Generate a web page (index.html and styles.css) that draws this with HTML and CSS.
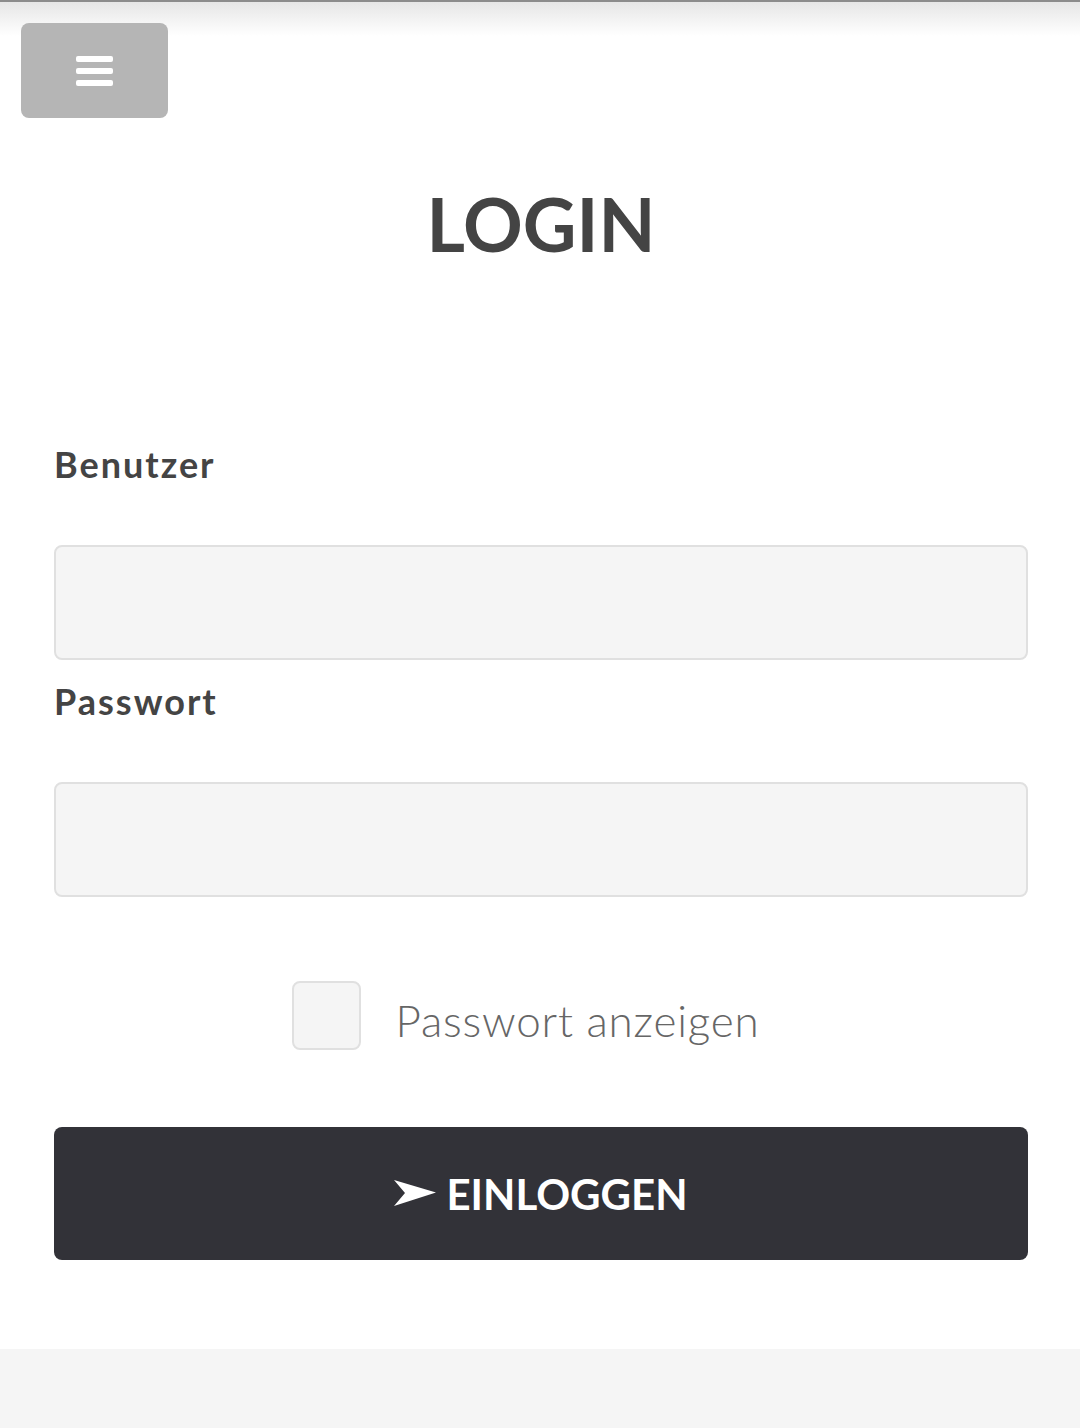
FILE: index.html
```html
<!doctype html>
<html lang="de">

<head>
  <meta charset="UTF-8" />
  <meta name="viewport" content="width=device-width, initial-scale=1.0" />
  <title>Login</title>
  <link rel="stylesheet" href="styles.css">
</head>

<body>
  <header class="topbar">
    <button class="menu-toggle" type="button" aria-label="Menü">
      <span class="bar"></span>
      <span class="bar"></span>
      <span class="bar"></span>
    </button>
  </header>

  <main class="login">
    <h1>LOGIN</h1>

    <form class="login-form">
      <label for="user">Benutzer</label>
      <input type="text" id="user" name="user" />

      <label for="pass">Passwort</label>
      <input type="password" id="pass" name="pass" />

      <div class="show-pass">
        <input type="checkbox" id="showpass" />
        <label for="showpass">Passwort anzeigen</label>
      </div>

      <button class="submit" type="submit">
        <svg class="arrow" width="42" height="27" viewBox="0 0 42 27">
          <polygon points="0,0 42,12.5 0,26 11,13" fill="#fff" />
        </svg>
        EINLOGGEN
      </button>
    </form>
  </main>

  <footer class="footer"></footer>
</body>

</html>
```

FILE: styles.css
```css
body {
  font-family: Lato, "Open Sans", sans-serif;
  margin: 0;
  background-color: #fff;
  color: #444;
}

.topbar {
  border-top: 2px solid #8c8c8c;
  padding: 21px 21px 0;
  height: 95px;
  background: linear-gradient(#e6e6e6, #fff 34px);
}

.menu-toggle {
  width: 147px;
  height: 95px;
  border: none;
  border-radius: 8px;
  background-color: #b5b5b5;
  display: flex;
  flex-direction: column;
  align-items: center;
  justify-content: center;
  gap: 6px;
  padding: 0;
}

.menu-toggle .bar {
  display: block;
  width: 37px;
  height: 6px;
  border-radius: 2px;
  background-color: #fff;
}

.login {
  padding: 0 52px 0 54px;
}

h1 {
  margin: 63px 0 0;
  font-size: 74px;
  line-height: 86px;
  font-weight: 700;
  text-align: center;
  color: #444;
}

.login-form {
  display: flex;
  flex-direction: column;
  padding-top: 176px;
}

.login-form > label {
  font-size: 36px;
  font-weight: 700;
  line-height: 42px;
  letter-spacing: 2px;
  color: #444;
}

.login-form > input {
  box-sizing: border-box;
  height: 115px;
  margin-top: 60px;
  margin-bottom: 20px;
  border: 2px solid #e0e0e0;
  border-radius: 8px;
  background-color: #f5f5f5;
}

.show-pass {
  display: flex;
  align-items: center;
  justify-content: center;
  gap: 34px;
  margin-top: 64px;
  padding-right: 30px;
}

.show-pass input {
  appearance: none;
  margin: 0;
  width: 69px;
  height: 69px;
  border: 2px solid #e0e0e0;
  border-radius: 8px;
  background-color: #f5f5f5;
}

.show-pass label {
  margin-top: 8px;
  font-size: 44px;
  font-weight: 300;
  letter-spacing: 0.8px;
  color: #666;
}

.submit {
  display: flex;
  align-items: center;
  justify-content: center;
  gap: 10px;
  height: 133px;
  margin-top: 77px;
  border: none;
  border-radius: 8px;
  background-color: #323238;
  color: #fff;
  font-family: inherit;
  font-size: 42px;
  font-weight: 700;
}

.footer {
  margin-top: 89px;
  height: 81px;
  background-color: #f5f5f5;
}
```
